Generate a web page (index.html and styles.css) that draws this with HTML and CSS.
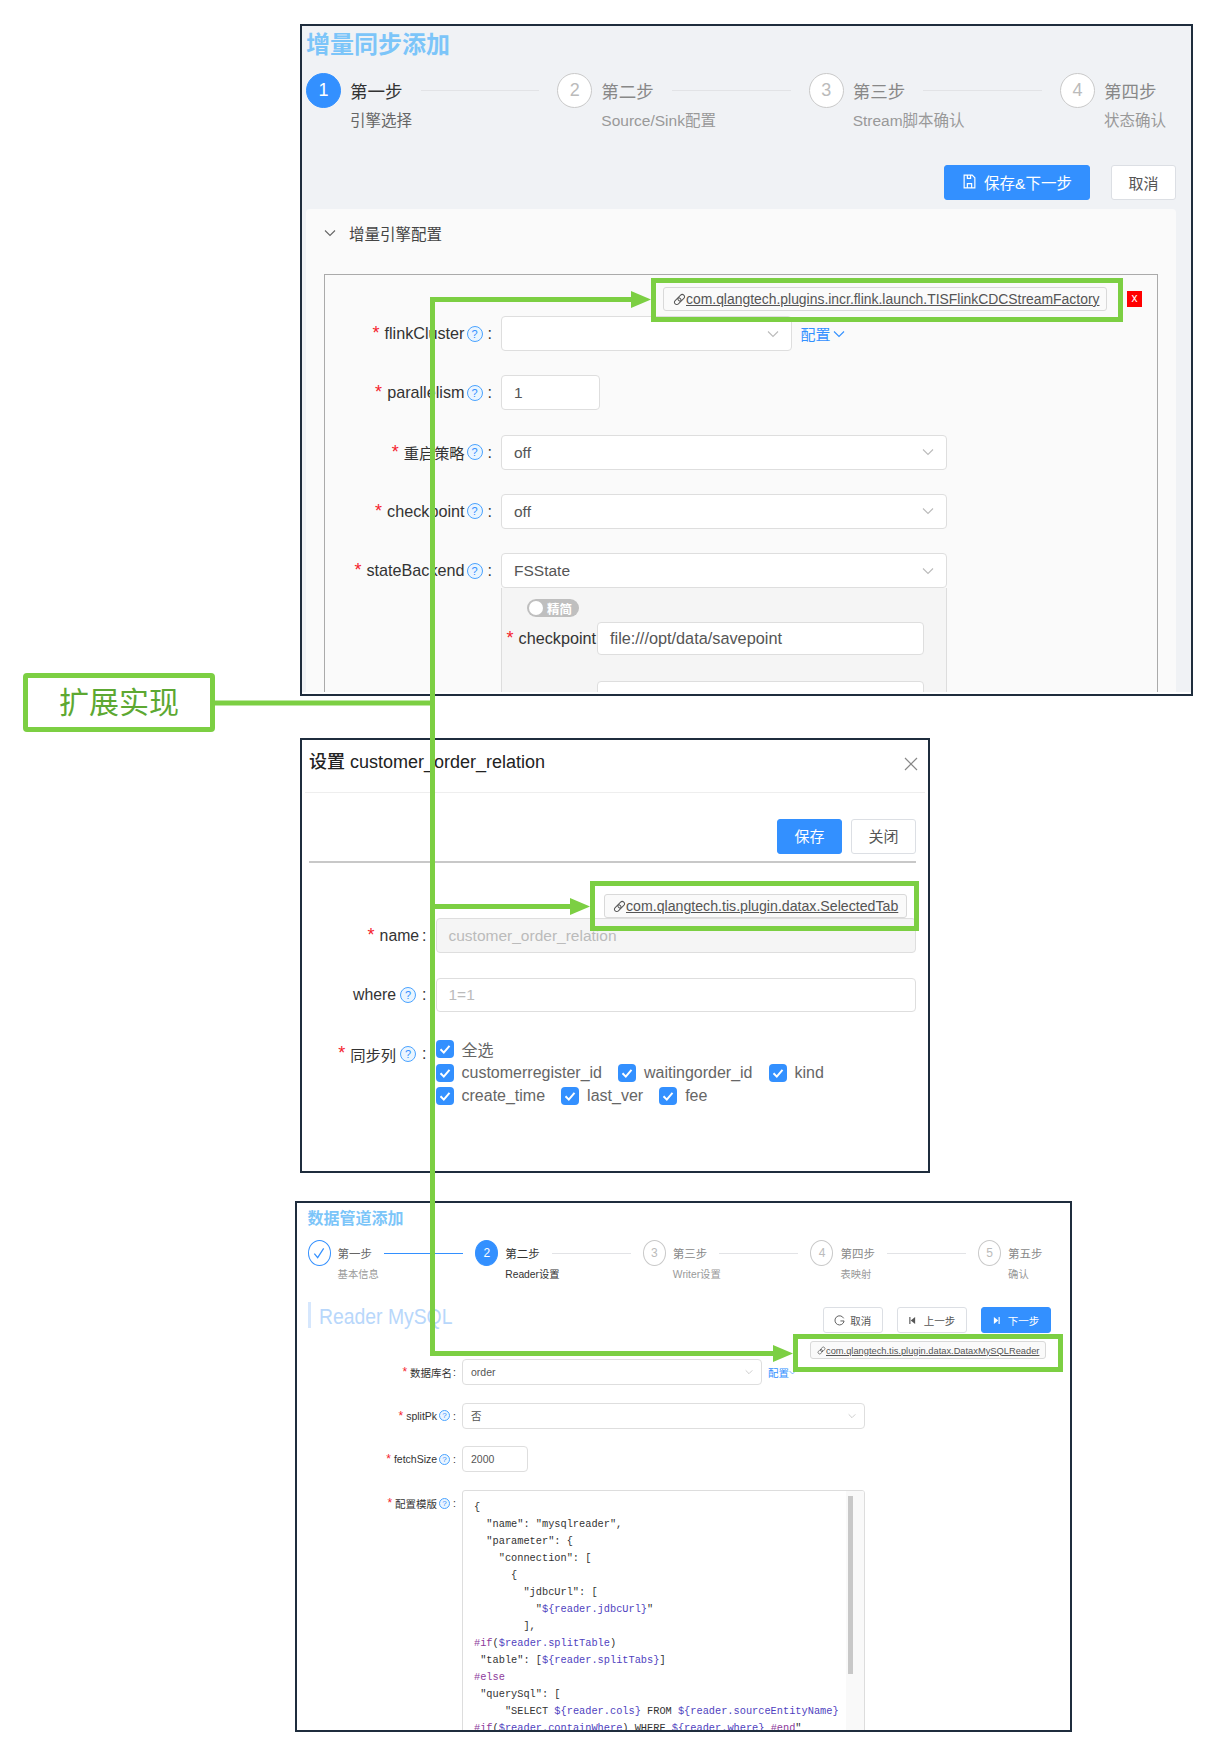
FILE: index.html
```html
<!DOCTYPE html>
<html lang="zh">
<head>
  <meta charset="UTF-8">
  <title>扩展实现</title>
  <link rel="stylesheet" href="styles.css">
</head>
<body>
  <svg class="defs" width="0" height="0">
    <symbol id="chev" viewBox="0 0 12 8"><path d="M1 1.5 6 6.5 11 1.5" fill="none" stroke="currentColor" stroke-width="1.1"/></symbol>
    <symbol id="link" viewBox="0 0 16 16"><g transform="rotate(-45 8 8)" fill="none" stroke="currentColor" stroke-width="1.2"><rect x="0.5" y="5.2" width="9" height="5.6" rx="2.8"/><rect x="6.5" y="5.2" width="9" height="5.6" rx="2.8"/></g></symbol>
    <symbol id="tick" viewBox="0 0 18 18"><path d="M4.5 9.2 7.8 12.6 13.5 5.8" fill="none" stroke="#fff" stroke-width="2"/></symbol>
  </svg>

  <section class="panel panel-incr">
    <div class="panel-body">
      <h1 class="page-title">增量同步添加</h1>
      <div class="steps">
        <div class="step active">
          <span class="step-num">1</span>
          <div class="step-body">
            <div class="step-head"><span class="step-name">第一步</span><i class="step-line"></i></div>
            <div class="step-sub">引擎选择</div>
          </div>
        </div>
        <div class="step">
          <span class="step-num">2</span>
          <div class="step-body">
            <div class="step-head"><span class="step-name">第二步</span><i class="step-line"></i></div>
            <div class="step-sub">Source/Sink配置</div>
          </div>
        </div>
        <div class="step">
          <span class="step-num">3</span>
          <div class="step-body">
            <div class="step-head"><span class="step-name">第三步</span><i class="step-line"></i></div>
            <div class="step-sub">Stream脚本确认</div>
          </div>
        </div>
        <div class="step last">
          <span class="step-num">4</span>
          <div class="step-body">
            <div class="step-head"><span class="step-name">第四步</span></div>
            <div class="step-sub">状态确认</div>
          </div>
        </div>
      </div>
      <div class="actions">
        <button class="btn primary btn-save">
          <svg class="btn-ico" viewBox="0 0 14 14"><path d="M2 1h7.5L12 3.5V13H2z M5 9h4v4H5z M5 1v3h3V1" fill="none" stroke="currentColor" stroke-width="1.1"/></svg>
          保存&amp;下一步
        </button>
        <button class="btn btn-cancel">取消</button>
      </div>
      <div class="card">
        <div class="card-head">
          <svg class="card-chev"><use href="#chev"/></svg>
          <span>增量引擎配置</span>
        </div>
        <div class="plugin-box">
          <div class="tag-row">
            <a class="tag"><svg class="tag-ico"><use href="#link"/></svg><u>com.qlangtech.plugins.incr.flink.launch.TISFlinkCDCStreamFactory</u></a>
            <span class="del">x</span>
          </div>
          <div class="form">
            <div class="row">
              <label class="lbl"><b>*</b>flinkCluster<span class="help">?</span><span class="colon">:</span></label>
              <div class="field select w-flink"><svg class="chev"><use href="#chev"/></svg></div>
              <a class="cfg">配置<svg class="cfg-chev"><use href="#chev"/></svg></a>
            </div>
            <div class="row">
              <label class="lbl"><b>*</b>parallelism<span class="help">?</span><span class="colon">:</span></label>
              <div class="field w-short">1</div>
            </div>
            <div class="row">
              <label class="lbl"><b>*</b><span class="cn">重启策略</span><span class="help">?</span><span class="colon">:</span></label>
              <div class="field select w-full">off<svg class="chev"><use href="#chev"/></svg></div>
            </div>
            <div class="row">
              <label class="lbl"><b>*</b>checkpoint<span class="help">?</span><span class="colon">:</span></label>
              <div class="field select w-full">off<svg class="chev"><use href="#chev"/></svg></div>
            </div>
            <div class="row">
              <label class="lbl"><b>*</b>stateBackend<span class="help">?</span><span class="colon">:</span></label>
              <div class="state-col">
                <div class="field select w-full">FSState<svg class="chev"><use href="#chev"/></svg></div>
                <div class="sub-panel">
                  <div class="switch"><i class="knob"></i><span>精简</span></div>
                  <div class="sub-row">
                    <label class="sub-lbl"><b>*</b>checkpoint</label>
                    <div class="field sub-field">file:///opt/data/savepoint</div>
                  </div>
                  <div class="sub-row next">
                    <div class="field sub-field"></div>
                  </div>
                </div>
              </div>
            </div>
          </div>
        </div>
      </div>
    </div>
  </section>

  <section class="panel panel-tab">
    <div class="modal-head">
      <span class="modal-title">设置 customer_order_relation</span>
      <svg class="modal-x" viewBox="0 0 14 14"><path d="M1 1 13 13 M13 1 1 13" stroke="#888" stroke-width="1.2"/></svg>
    </div>
    <div class="modal-actions">
      <button class="btn primary btn-m">保存</button>
      <button class="btn btn-m">关闭</button>
    </div>
    <div class="modal-rule"></div>
    <div class="tag-row modal-tag">
      <a class="tag"><svg class="tag-ico"><use href="#link"/></svg><u>com.qlangtech.tis.plugin.datax.SelectedTab</u></a>
    </div>
    <div class="modal-form">
      <div class="row">
        <label class="lbl"><b>*</b>name<span class="colon tight">:</span></label>
        <div class="field disabled grow">customer_order_relation</div>
      </div>
      <div class="row row-where">
        <label class="lbl">where<span class="help">?</span><span class="colon">:</span></label>
        <div class="field placeholder grow">1=1</div>
      </div>
      <div class="row row-cols">
        <label class="lbl"><b>*</b><span class="cn">同步列</span><span class="help">?</span><span class="colon">:</span></label>
        <div class="checks">
          <div class="check-line">
            <span class="check"><svg class="cb"><use href="#tick"/></svg>全选</span>
          </div>
          <div class="check-line">
            <span class="check"><svg class="cb"><use href="#tick"/></svg>customerregister_id</span>
            <span class="check"><svg class="cb"><use href="#tick"/></svg>waitingorder_id</span>
            <span class="check"><svg class="cb"><use href="#tick"/></svg>kind</span>
          </div>
          <div class="check-line">
            <span class="check"><svg class="cb"><use href="#tick"/></svg>create_time</span>
            <span class="check"><svg class="cb"><use href="#tick"/></svg>last_ver</span>
            <span class="check"><svg class="cb"><use href="#tick"/></svg>fee</span>
          </div>
        </div>
      </div>
    </div>
  </section>

  <section class="panel panel-pipe">
    <h2 class="pipe-title">数据管道添加</h2>
    <div class="steps-s">
      <div class="step done">
        <span class="step-num"><svg viewBox="0 0 12 12"><path d="M2.5 6.5 5 9.5 9.5 2.5" fill="none" stroke="#3390ff" stroke-width="0.9"/></svg></span>
        <div class="step-body">
          <div class="step-head"><span class="step-name">第一步</span><i class="step-line"></i></div>
          <div class="step-sub">基本信息</div>
        </div>
      </div>
      <div class="step active">
        <span class="step-num">2</span>
        <div class="step-body">
          <div class="step-head"><span class="step-name">第二步</span><i class="step-line"></i></div>
          <div class="step-sub">Reader设置</div>
        </div>
      </div>
      <div class="step">
        <span class="step-num">3</span>
        <div class="step-body">
          <div class="step-head"><span class="step-name">第三步</span><i class="step-line"></i></div>
          <div class="step-sub">Writer设置</div>
        </div>
      </div>
      <div class="step">
        <span class="step-num">4</span>
        <div class="step-body">
          <div class="step-head"><span class="step-name">第四步</span><i class="step-line"></i></div>
          <div class="step-sub">表映射</div>
        </div>
      </div>
      <div class="step last">
        <span class="step-num">5</span>
        <div class="step-body">
          <div class="step-head"><span class="step-name">第五步</span></div>
          <div class="step-sub">确认</div>
        </div>
      </div>
    </div>
    <div class="pipe-bar">
      <h3 class="reader-title"><span>Reader MySQL</span></h3>
      <div class="pipe-btns">
        <button class="btn btn-s w-cancel"><svg class="btn-ico-s" viewBox="0 0 12 12"><path d="M10.5 3.6A5 5 0 1 0 11 6.5H7" fill="none" stroke="currentColor" stroke-width="1"/></svg>取消</button>
        <button class="btn btn-s w-step"><svg class="btn-ico-t" viewBox="0 0 8 10"><path d="M1 1v8" stroke="currentColor" stroke-width="1.3"/><path d="M7 1 2 5l5 4z" fill="currentColor"/></svg>上一步</button>
        <button class="btn btn-s primary w-step"><svg class="btn-ico-t" viewBox="0 0 8 10"><path d="M7 1v8" stroke="currentColor" stroke-width="1.3"/><path d="M1 1l5 4-5 4z" fill="currentColor"/></svg>下一步</button>
      </div>
    </div>
    <div class="tag-row pipe-tag">
      <a class="tag tag-s"><svg class="tag-ico-s"><use href="#link"/></svg><u>com.qlangtech.tis.plugin.datax.DataxMySQLReader</u></a>
    </div>
    <div class="pipe-form">
      <div class="row">
        <label class="lbl"><b>*</b>数据库名<span class="colon tight">:</span></label>
        <div class="field select w-db">order<svg class="chev"><use href="#chev"/></svg></div>
        <a class="cfg">配置<svg class="cfg-chev"><use href="#chev"/></svg></a>
      </div>
      <div class="row">
        <label class="lbl"><b>*</b>splitPk<span class="help">?</span><span class="colon">:</span></label>
        <div class="field select w-wide">否<svg class="chev"><use href="#chev"/></svg></div>
      </div>
      <div class="row">
        <label class="lbl"><b>*</b>fetchSize<span class="help">?</span><span class="colon">:</span></label>
        <div class="field w-num">2000</div>
      </div>
      <div class="row">
        <label class="lbl"><b>*</b>配置模版<span class="help">?</span><span class="colon">:</span></label>
        <div class="code-box">
<pre class="code">{
  "name": "mysqlreader",
  "parameter": {
    "connection": [
      {
        "jdbcUrl": [
          "<span class="v">${reader.jdbcUrl}</span>"
        ],
<span class="k">#if</span>(<span class="v">$reader.splitTable</span>)
 "table": [<span class="v">${reader.splitTabs}</span>]
<span class="k">#else</span>
 "querySql": [
     "SELECT <span class="v">${reader.cols}</span> FROM <span class="v">${reader.sourceEntityName}</span>
<span class="k">#if</span>(<span class="v">$reader.containWhere</span>) WHERE <span class="v">${reader.where}</span> <span class="k">#end</span>"</pre>
          <div class="gutter"><i class="thumb"></i></div>
        </div>
      </div>
    </div>
  </section>

  <div class="callout">扩展实现</div>

  <!-- green annotation drawn over the three screenshots -->
  <svg class="overlay" width="1216" height="1756" viewBox="0 0 1216 1756">
    <g fill="none" stroke="#7ccf43" stroke-width="5">
      <rect x="653.5" y="280.5" width="467" height="39"/>
      <rect x="592.5" y="883.5" width="324" height="45"/>
      <rect x="795.5" y="1336.5" width="265" height="33"/>
      <path d="M433 299.500H633 M432.500 297V1356 M215 703H433 M432 906.500H572 M432 1353.500H775"/>
    </g>
    <g fill="#7ccf43">
      <path d="M631 291 651 299.500 631 308z"/>
      <path d="M570 898 590 906.500 570 915z"/>
      <path d="M773 1345 793 1353.500 773 1362z"/>
    </g>
  </svg>
</body>
</html>
```

FILE: styles.css
```css
* {
  box-sizing: border-box;
}
body {
  margin: 0;
  padding-top: 24px;
  height: 1756px;
  position: relative;
  overflow: hidden;
  background: #fff;
  font-family: "Liberation Sans", "Noto Sans CJK SC", sans-serif;
  color: #333;
}
.defs {
  position: absolute;
}
button {
  font-family: inherit;
}
.panel {
  border: 2px solid #1f2d3d;
  overflow: hidden;
  background: #fff;
}

/* shared bits */
.btn {
  display: inline-flex;
  align-items: center;
  justify-content: center;
  border: 1px solid #dcdfe4;
  border-radius: 3px;
  background: #fff;
  color: #555;
  padding: 0;
}
.btn.primary {
  background: #3390ff;
  border-color: #3390ff;
  color: #fff;
}
.row {
  display: flex;
  align-items: flex-start;
}
.lbl {
  display: flex;
  justify-content: flex-end;
  align-items: center;
  flex: none;
  color: #333;
}
.lbl b {
  color: #f5222d;
  font-weight: 400;
}
.help {
  display: inline-block;
  border: 1px solid #4aa3ff;
  border-radius: 50%;
  background: #eaf5ff;
  color: #3390ff;
  text-align: center;
}
.field {
  position: relative;
  flex: none;
  background: #fff;
  border: 1px solid #dedede;
  border-radius: 4px;
  color: #555;
}
.chev {
  position: absolute;
  top: 50%;
  color: #bbb;
}
.cfg {
  color: #3390ff;
  display: inline-flex;
  align-items: center;
}
.tag-row {
  display: flex;
  justify-content: flex-end;
  align-items: center;
}
.tag {
  display: inline-flex;
  align-items: center;
  border: 1px solid #d9d9d9;
  border-radius: 3px;
  background: #fafafa;
  color: #555;
}

/* first screenshot */
.panel-incr {
  margin-left: 300px;
  width: 893px;
  height: 672px;
  padding-bottom: 2px;
}
.panel-body {
  height: 666px;
  overflow: hidden;
  background: #f0f2f5;
}
.page-title {
  margin: 0 0 11px 4px;
  padding-top: 2px;
  font-size: 24px;
  line-height: 34px;
  font-weight: 700;
  color: #7cc5f9;
}
.steps {
  display: flex;
  margin-left: 4px;
  width: 860px;
}
.step {
  display: flex;
  flex: 1;
}
.step.last {
  flex: none;
}
.step-num {
  flex: none;
  display: flex;
  align-items: center;
  justify-content: center;
  border-radius: 50%;
  border: 1px solid #c9c9c9;
  background: #fff;
  color: #bbb;
}
.step.active .step-num {
  background: #3390ff;
  border-color: #3390ff;
  color: #fff;
}
.step-body {
  flex: 1;
}
.step-head {
  display: flex;
  align-items: center;
}
.step-name {
  color: #888;
  flex: none;
}
.step-line {
  flex: 1;
  height: 1px;
  background: #e2e3e6;
}
.step-sub {
  color: #999;
  white-space: nowrap;
}
.step.active .step-name,
.step.active .step-sub {
  color: #333;
}
.steps .step-num {
  width: 35px;
  height: 35px;
  font-size: 18px;
}
.steps .step-body {
  margin-left: 9px;
}
.steps .step-head {
  height: 35px;
}
.steps .step-name {
  font-size: 17.500px;
}
.steps .step-line {
  margin: 0 18px;
}
.steps .step-sub {
  margin-top: 2px;
  font-size: 15.500px;
  line-height: 22px;
}
.steps .step.active .step-sub {
  color: #666;
}
.actions {
  display: flex;
  justify-content: flex-end;
  gap: 21px;
  margin-top: 33px;
  padding-right: 15px;
}
.btn-save {
  width: 146px;
  height: 35px;
  padding-bottom: 2px;
  font-size: 15.500px;
  gap: 7px;
}
.btn-ico {
  width: 15px;
  height: 15px;
}
.btn-cancel {
  width: 65px;
  height: 35px;
  font-size: 15px;
}
.card {
  margin: 9px 15px 0 4px;
  height: 500px;
  padding: 0 18px;
  background: #fafafa;
  border-radius: 4px;
}
.card-head {
  height: 48px;
  display: flex;
  align-items: center;
  font-size: 15.500px;
  color: #444;
  gap: 13px;
}
.card-chev {
  width: 12px;
  height: 8px;
  color: #666;
}
.plugin-box {
  margin-top: 17px;
  height: 460px;
  border: 1px solid #aaa;
  padding-top: 12px;
}
.plugin-box .tag-row {
  gap: 20px;
  padding-right: 15px;
}
.plugin-box .tag {
  width: 444px;
  height: 24px;
  padding-left: 9px;
  font-size: 13.920px;
  white-space: nowrap;
}
.tag-ico {
  width: 13px;
  height: 13px;
  margin-right: 0;
  flex: none;
}
.del {
  width: 15px;
  height: 16px;
  background: #f00;
  color: #fff;
  font-size: 12px;
  line-height: 15px;
  text-align: center;
}
.form {
  margin-top: 5px;
  display: flex;
  flex-direction: column;
  gap: 24.300px;
}
.form .lbl {
  width: 176px;
  height: 35px;
  padding-right: 9px;
  font-size: 16.200px;
}
.form .lbl b {
  margin-right: 5px;
  font-size: 18px;
}
.form .lbl .cn {
  font-size: 15.200px;
}
.form .help {
  width: 16px;
  height: 16px;
  margin-left: 2px;
  font-size: 11px;
  line-height: 14px;
}
.form .colon {
  margin-left: 5px;
}
.form .field {
  height: 35px;
  padding-left: 12px;
  font-size: 15.500px;
  line-height: 33px;
}
.form .chev {
  right: 12px;
  margin-top: -4px;
  width: 12px;
  height: 8px;
}
.w-flink {
  width: 290.500px;
}
.w-short {
  width: 99px;
}
.w-full {
  width: 446px;
}
.form .cfg {
  margin-left: 9px;
  height: 35px;
  font-size: 15px;
  gap: 2px;
}
.cfg-chev {
  width: 12px;
  height: 8px;
}
.state-col {
  flex: none;
}
.sub-panel {
  width: 446px;
  height: 120px;
  background: #f5f5f5;
  border: 1px solid #ddd;
  border-top: none;
  padding-top: 11px;
}
.switch {
  margin-left: 25px;
  width: 52px;
  height: 18px;
  border-radius: 9px;
  background: #bfbfbf;
  display: flex;
  align-items: center;
  color: #fff;
  font-size: 12.500px;
  font-weight: 700;
  padding-left: 2px;
  gap: 4px;
}
.knob {
  width: 14px;
  height: 14px;
  border-radius: 50%;
  background: #fff;
}
.sub-row {
  display: flex;
  justify-content: flex-end;
  align-items: center;
  margin-top: 5px;
  padding-right: 22px;
}
.sub-row.next {
  margin-top: 26px;
}
.sub-lbl {
  font-size: 16.200px;
  flex: none;
}
.sub-lbl b {
  color: #f5222d;
  font-size: 18px;
  font-weight: 400;
  margin-right: 5px;
}
.form .sub-field {
  width: 327px;
  height: 33px;
  font-size: 16.300px;
  line-height: 31px;
  margin-left: 1px;
}

/* second screenshot */
.panel-tab {
  margin: 42px 0 0 300px;
  width: 630px;
  height: 435px;
}
.modal-head {
  display: flex;
  justify-content: space-between;
  margin: 0 3px;
  height: 53px;
  padding: 10px 7px 0 4px;
  border-bottom: 1px solid #eee;
}
.modal-title {
  font-size: 18px;
  line-height: 24px;
  font-weight: 500;
  color: #222;
}
.modal-x {
  width: 14px;
  height: 14px;
  margin-top: 7px;
}
.modal-actions {
  display: flex;
  justify-content: flex-end;
  gap: 9px;
  margin-top: 26px;
  padding-right: 12px;
}
.btn-m {
  width: 65px;
  height: 35px;
  padding-bottom: 2px;
  font-size: 15px;
}
.modal-rule {
  margin: 7px 12px 0 7px;
  height: 2px;
  background: #c8c8c8;
}
.modal-tag {
  margin-top: 31px;
  padding-right: 21.500px;
}
.modal-tag .tag {
  width: 302.500px;
  height: 24px;
  padding-left: 8px;
  font-size: 14.170px;
  white-space: nowrap;
}
.modal-form {
  display: flex;
  flex-direction: column;
  gap: 25px;
  padding-right: 12px;
}
.modal-form .lbl {
  width: 133.500px;
  height: 35px;
  padding-right: 9px;
  font-size: 15.800px;
}
.modal-form .lbl b {
  margin-right: 5px;
  font-size: 18px;
}
.modal-form .lbl .cn {
  font-size: 15.300px;
}
.modal-form .help {
  width: 16px;
  height: 16px;
  margin-left: 4px;
  font-size: 11px;
  line-height: 14px;
}
.modal-form .colon {
  margin-left: 6px;
}
.modal-form .colon.tight {
  margin-left: 3px;
}
.modal-form .field {
  height: 35px;
  padding-left: 12px;
  font-size: 15.500px;
  line-height: 33px;
}
.modal-form .row-where .lbl {
  height: 34px;
}
.modal-form .row-where .field {
  height: 34px;
  line-height: 32px;
}
.modal-form .row-cols .lbl {
  height: 33px;
}
.grow {
  flex: 1;
}
.field.disabled {
  background: #f5f5f5;
  color: #bbb;
}
.field.placeholder {
  color: #bbb;
}
.checks {
  display: flex;
  flex-direction: column;
  flex: 1;
}
.check-line {
  display: flex;
  gap: 16px;
  height: 23px;
  align-items: center;
}
.check-line:first-child {
  margin-bottom: 1.500px;
}
.check {
  display: inline-flex;
  align-items: center;
  font-size: 16px;
  color: #666;
  gap: 8px;
}
.cb {
  width: 18px;
  height: 18px;
  background: #3390ff;
  border-radius: 4px;
}

/* third screenshot */
.panel-pipe {
  position: relative;
  margin: 28px 0 0 295px;
  width: 777px;
  height: 531px;
}
.pipe-title {
  margin: 0 0 6px 10.600px;
  padding-top: 1px;
  font-size: 16px;
  line-height: 30px;
  font-weight: 700;
  color: #7cc5f9;
}
.steps-s {
  display: flex;
  margin-left: 10.600px;
  width: 735px;
}
.steps-s .step-num {
  width: 23px;
  height: 26px;
  font-size: 12px;
}
.steps-s .step-num svg {
  width: 16px;
  height: 16px;
}
.step.done .step-num {
  border-color: #3390ff;
}
.steps-s .step-body {
  margin-left: 7px;
}
.steps-s .step-head {
  height: 26px;
}
.steps-s .step-name {
  font-size: 11.500px;
}
.steps-s .step-line {
  margin: 0 12px;
}
.step.done .step-line {
  background: #3390ff;
}
.steps-s .step-sub {
  margin-top: 2px;
  font-size: 10.300px;
  line-height: 14px;
}
.step.done .step-name {
  color: #666;
}
.pipe-bar {
  display: flex;
  justify-content: space-between;
  align-items: flex-start;
  margin: 20px 19px 0 10.600px;
}
.reader-title {
  margin: 0;
  height: 26px;
  padding-left: 8.500px;
  border-left: 3px solid #d6e7fd;
  font-size: 22px;
  line-height: 30px;
  font-weight: 400;
  color: #b8d7fb;
  white-space: nowrap;
}
.reader-title span {
  display: inline-block;
  transform: scaleX(0.88);
  transform-origin: left center;
}
.pipe-btns {
  display: flex;
  gap: 14px;
  margin-top: 5px;
}
.btn-s {
  height: 26px;
  font-size: 10.500px;
  gap: 5px;
}
.w-cancel {
  width: 60.500px;
}
.w-step {
  width: 70px;
}
.btn-ico-s {
  width: 11px;
  height: 11px;
}
.btn-ico-t {
  width: 7px;
  height: 9px;
  margin-right: 3px;
}
.pipe-tag {
  margin-top: 8px;
  padding-right: 24px;
}
.tag-s {
  width: 236px;
  height: 18px;
  padding-left: 6px;
  padding-top: 1px;
  font-size: 9.300px;
  white-space: nowrap;
}
.tag-ico-s {
  width: 9px;
  height: 9px;
  flex: none;
}
.pipe-form {
  display: flex;
  flex-direction: column;
  gap: 17.700px;
}
.pipe-form .lbl {
  width: 165px;
  height: 26px;
  padding-right: 6px;
  font-size: 10.500px;
}
.pipe-form .lbl b {
  margin-right: 3px;
  font-size: 12px;
}
.pipe-form .help {
  width: 11px;
  height: 11px;
  margin-left: 2px;
  font-size: 8px;
  line-height: 9px;
}
.pipe-form .colon {
  margin-left: 3px;
}
.pipe-form .colon.tight {
  margin-left: 1px;
}
.pipe-form .field {
  height: 26px;
  padding-left: 8px;
  font-size: 10.500px;
  line-height: 24px;
}
.pipe-form .chev {
  right: 8px;
  margin-top: -3px;
  width: 8px;
  height: 6px;
}
.w-db {
  width: 300px;
}
.w-wide {
  width: 403px;
}
.w-num {
  width: 66px;
}
.pipe-form .cfg {
  margin-left: 6px;
  height: 26px;
  font-size: 10.500px;
}
.pipe-form .cfg-chev {
  width: 7px;
  height: 5px;
}
.code-box {
  display: flex;
  width: 403px;
  height: 300px;
  border: 1px solid #ddd;
  border-radius: 3px;
  overflow: hidden;
}
.code {
  flex: 1;
  margin: 0;
  padding: 8px 0 0 11px;
  font-family: "Liberation Mono", monospace;
  font-size: 10.300px;
  line-height: 17px;
  color: #333;
}
.code .v {
  color: #4f3fc0;
}
.code .k {
  color: #8d3a9c;
}
.gutter {
  width: 18px;
  flex: none;
  background: #f9f9f9;
  padding: 5px 0 0 2px;
}
.thumb {
  display: block;
  width: 5px;
  height: 178px;
  background: #c8c8c8;
}

/* annotation layer */
.callout {
  position: absolute;
  left: 23px;
  top: 673px;
  width: 192px;
  height: 59px;
  border: 5px solid #7ccf43;
  border-radius: 4px;
  background: #fff;
  color: #5da832;
  font-size: 30px;
  line-height: 49px;
  text-align: center;
}
.overlay {
  position: absolute;
  left: 0;
  top: 0;
  pointer-events: none;
}
```
